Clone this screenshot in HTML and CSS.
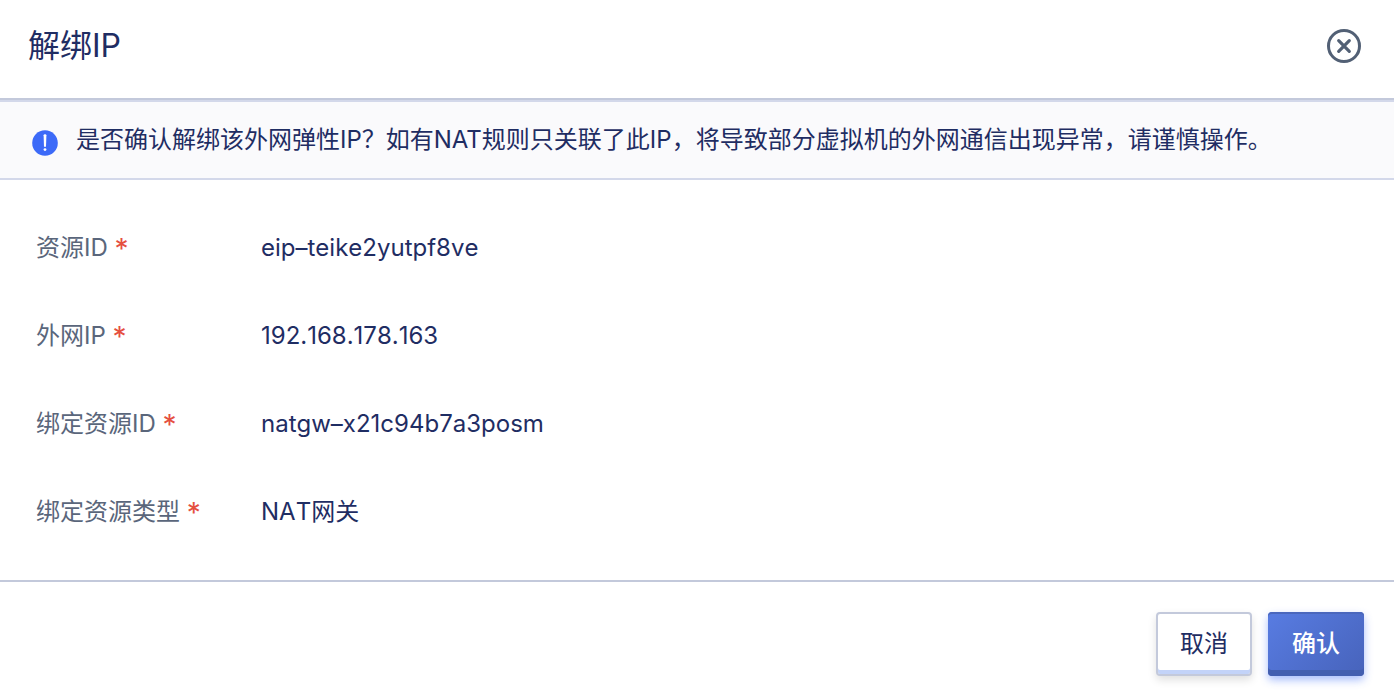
FILE: index.html
```html
<!DOCTYPE html>
<html lang="zh-CN">
<head>
<meta charset="utf-8">
<meta name="viewport" content="width=device-width, initial-scale=1">
<title>解绑IP</title>
<link rel="stylesheet" href="styles.css">
</head>
<body>
<section class="dialog" role="dialog" aria-labelledby="dialog-title">
  <header class="dialog-header">
    <h1 class="dialog-title" id="dialog-title">解绑IP</h1>
    <button class="close" type="button" aria-label="关闭">
      <svg viewBox="0 0 36 36" width="36" height="36" fill="none" stroke="currentColor">
        <circle cx="18" cy="18" r="15.5" stroke-width="3"/>
        <path d="M12.7 12.7l10.6 10.6M23.3 12.7l-10.6 10.6" stroke-width="3.2" stroke-linecap="round"/>
      </svg>
    </button>
  </header>
  <div class="notice">
    <svg class="notice-icon" viewBox="0 0 26 26" width="26" height="26" aria-hidden="true">
      <circle cx="13" cy="13" r="12.8" fill="#3c6af8"/>
      <path d="M11.6 5.2q0-1 1.4-1t1.4 1l-.4 11.6h-2z" fill="#fff"/>
      <circle cx="13" cy="19.6" r="1.4" fill="#fff"/>
    </svg>
    <p class="notice-text">是否确认解绑该外网弹性IP？如有NAT规则只关联了此IP，将导致部分虚拟机的外网通信出现异常，请谨慎操作。</p>
  </div>
  <dl class="details">
    <div class="row"><dt>资源ID <span class="required">*</span></dt><dd>eip–teike2yutpf8ve</dd></div>
    <div class="row"><dt>外网IP <span class="required">*</span></dt><dd>192.168.178.163</dd></div>
    <div class="row"><dt>绑定资源ID <span class="required">*</span></dt><dd>natgw–x21c94b7a3posm</dd></div>
    <div class="row"><dt>绑定资源类型 <span class="required">*</span></dt><dd>NAT网关</dd></div>
  </dl>
  <footer class="dialog-footer">
    <button class="button" type="button">取消</button>
    <button class="button button-primary" type="button">确认</button>
  </footer>
</section>
</body>
</html>
```
FILE: styles.css
```css
* { box-sizing: border-box; }
body {
  margin: 0;
  background: #fff;
  color: #1f2d63;
  font: 24px/32px Inter, "Noto Sans CJK SC", sans-serif;
}
.dialog { display: flex; flex-direction: column; min-height: 100vh; }
.dialog-header {
  display: flex;
  align-items: center;
  justify-content: space-between;
  padding: 26px 32px 32px 28px;
  border-bottom: 2px solid #c3c9db;
}
.dialog-title { margin: 0; font-size: 32px; line-height: 40px; font-weight: 400; }
.close { display: flex; padding: 0; border: 0; background: none; color: #526075; }
.notice {
  display: flex;
  align-items: flex-end;
  gap: 18px;
  padding: 22px 32px;
  background: #fafafc;
  border-top: 2px solid #d3d8ea;
  border-bottom: 2px solid #d3d8ea;
}
.notice-icon { flex: none; }
.notice-text { margin: 0; }
.details { display: grid; gap: 56px; margin: 0; padding: 52px 36px; }
.row { display: grid; grid-template-columns: 225px 1fr; }
dt { color: #5a667b; }
dd { margin: 0; font-kerning: none; }
.required { color: #e5503f; font-size: 28px; line-height: 24px; vertical-align: -3px; }
.dialog-footer {
  display: flex;
  justify-content: flex-end;
  gap: 16px;
  padding: 30px 30px 24px;
  border-top: 2px solid #c3c9db;
}
.button {
  width: 96px;
  height: 64px;
  padding: 0;
  border: 2px solid #c3c9db;
  border-radius: 4px;
  background: #fff;
  box-shadow: inset 0 -4px #c3d3f8, 0 4px 8px #00000020;
  color: inherit;
  font: inherit;
}
.button-primary {
  border: 0;
  background: linear-gradient(135deg, #587ce2, #4763bb);
  box-shadow: inset 0 -6px #435fb0, inset 0 2px #4a67bd, 0 4px 8px #3c6af870;
  color: #fff;
  font-weight: 500;
}
```
